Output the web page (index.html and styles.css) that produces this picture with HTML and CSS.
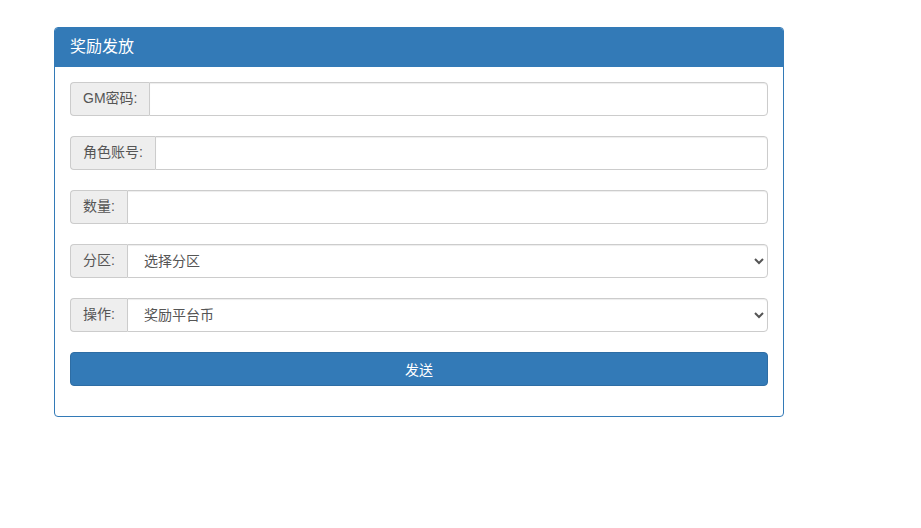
FILE: index.html
```html
<!DOCTYPE html>
<html lang="zh">
<head>
<meta charset="utf-8">
<title>奖励发放</title>
<link rel="stylesheet" href="styles.css">
</head>
<body>
<div class="page">
  <div class="panel">
    <div class="panel-heading"><h3 class="panel-title">奖励发放</h3></div>
    <div class="panel-body">
      <form class="form">
        <div class="input-group">
          <span class="addon">GM密码:</span>
          <input class="control" type="password">
        </div>
        <div class="input-group">
          <span class="addon">角色账号:</span>
          <input class="control" type="text">
        </div>
        <div class="input-group">
          <span class="addon">数量:</span>
          <input class="control" type="text">
        </div>
        <div class="input-group">
          <span class="addon">分区:</span>
          <select class="control select">
            <option>选择分区</option>
          </select>
        </div>
        <div class="input-group">
          <span class="addon">操作:</span>
          <select class="control select">
            <option>奖励平台币</option>
          </select>
        </div>
        <button type="button" class="btn">发送</button>
      </form>
    </div>
  </div>
</div>
</body>
</html>
```

FILE: styles.css
```css
* { box-sizing: border-box; }
html, body { margin: 0; padding: 0; background: #fff; }
body {
  font-family: "Liberation Sans", Arial, "Noto Sans CJK SC", sans-serif;
  font-size: 14px;
  line-height: 1.42857;
  color: #333;
}
.page {
  padding: 27px 0 0 54px;
}
.panel {
  width: 730px;
  border: 1px solid #337ab7;
  border-radius: 4px;
  background: #fff;
}
.panel-heading {
  background: #337ab7;
  color: #fff;
  padding: 10px 15px;
  border-bottom: 1px solid #337ab7;
  border-radius: 3px 3px 0 0;
}
.panel-title {
  margin: 0;
  font-size: 16px;
  font-weight: normal;
  line-height: 18px;
}
.panel-body {
  padding: 15px 15px 30px;
}
.form {
  display: flex;
  flex-direction: column;
  gap: 20px;
}
.input-group {
  display: flex;
  height: 34px;
}
.addon {
  display: flex;
  align-items: center;
  padding: 6px 12px;
  background: #eee;
  border: 1px solid #ccc;
  border-right: 0;
  border-radius: 4px 0 0 4px;
  color: #555;
  font-size: 14px;
  white-space: nowrap;
}
.control {
  flex: 1;
  min-width: 0;
  height: 34px;
  padding: 6px 12px;
  border: 1px solid #ccc;
  border-radius: 0 4px 4px 0;
  background: #fff;
  color: #555;
  font-family: inherit;
  font-size: 14px;
  box-shadow: inset 0 1px 1px rgba(0,0,0,.075);
  outline: none;
}
.select {
  padding-left: 12px;
}
.btn {
  height: 34px;
  padding: 6px 12px;
  border: 1px solid #2e6da4;
  border-radius: 4px;
  background: #337ab7;
  color: #fff;
  font-family: inherit;
  font-size: 14px;
  cursor: pointer;
}
```
